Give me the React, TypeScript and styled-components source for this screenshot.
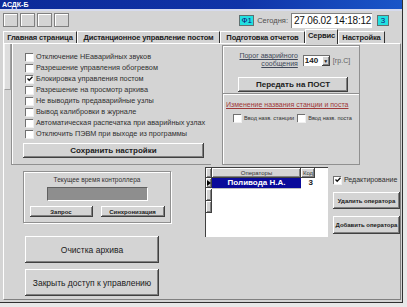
import React from "react";
import styled, { createGlobalStyle } from "styled-components";

const GlobalStyle = createGlobalStyle`
  html, body {
    margin: 0;
    padding: 0;
    background: #e8e8e8;
  }
  body {
    font-family: "Liberation Sans", Arial, sans-serif;
    color: #202020;
  }
`;

const raised = `
  background: #d4d4d4;
  box-shadow: inset -1px -1px #404040, inset 1px 1px #ffffff, inset -2px -2px #808080;
`;

const Window = styled.div`
  width: 403px;
  height: 303px;
  background: #d4d4d4;
  border-right: 1px solid #303030;
  border-bottom: 1px solid #303030;
  box-sizing: border-box;
  overflow: hidden;
`;

const TitleBar = styled.div`
  height: 9px;
  background: linear-gradient(90deg, #0c2a98 0%, #1034a8 60%, #1a56c8 100%);
  border-bottom: 2px solid #d6dbef;
  color: #fff;
  font-size: 7px;
  font-weight: bold;
  line-height: 9px;
  padding-left: 2px;
`;

const Toolbar = styled.div`
  height: 18px;
  display: flex;
  align-items: center;
  padding: 0 3px;
`;

const Square = styled.div`
  width: 15px;
  height: 14px;
  margin-right: 2px;
  box-sizing: border-box;
  border: 1px solid #808080;
  box-shadow: inset 1px 1px #ffffff;
  background: #d4d4d4;
`;

const Spacer = styled.div<{ $w?: number }>`
  flex: ${(p) => (p.$w ? "none" : "1")};
  width: ${(p) => p.$w ?? 0}px;
`;

const CyanBox = styled.div<{ $w: number }>`
  width: ${(p) => p.$w}px;
  height: 11px;
  box-sizing: border-box;
  background: #22e0e0;
  border: 1px solid #607070;
  color: #10107a;
  font-size: 8px;
  line-height: 9px;
  text-align: center;
`;

const TodayLabel = styled.span`
  font-size: 7.5px;
  color: #505050;
  margin: 0 3px 0 3px;
`;

const DateBox = styled.div`
  width: 81px;
  height: 15px;
  box-sizing: border-box;
  background: #fff;
  border-top: 1px solid #808080;
  border-left: 1px solid #808080;
  font-size: 10px;
  letter-spacing: -0.2px;
  line-height: 14px;
  padding-left: 2px;
  white-space: nowrap;
  overflow: hidden;
  color: #101010;
  margin-right: 5px;
`;

const TabStrip = styled.div`
  height: 14px;
  display: flex;
  align-items: flex-end;
  padding-left: 3px;
  position: relative;
  z-index: 1;
`;

const Tab = styled.div<{ $w: number; $active?: boolean }>`
  width: ${(p) => p.$w}px;
  height: ${(p) => (p.$active ? 15 : 12)}px;
  margin-bottom: ${(p) => (p.$active ? -1 : 0)}px;
  box-sizing: border-box;
  background: #d4d4d4;
  border-top: 1px solid #fff;
  border-left: 1px solid #fff;
  border-right: 1px solid #303030;
  font-size: 7.6px;
  letter-spacing: -0.15px;
  font-weight: bold;
  line-height: 11px;
  text-align: center;
  white-space: nowrap;
  overflow: hidden;
  color: #202020;
`;

const Panel = styled.div`
  margin-left: 3px;
  width: 398px;
  height: 257px;
  box-sizing: border-box;
  border-top: 1px solid #fff;
  border-left: 1px solid #fff;
  border-right: 1px solid #808080;
  border-bottom: 1px solid #808080;
  display: flex;
  flex-direction: column;
`;

const TopRow = styled.div`
  display: flex;
  height: 121px;
`;

const Strip = styled.div`
  width: 7px;
  height: 46px;
  box-sizing: border-box;
  background: #dedede;
  border-left: 1px solid #f4f4f4;
  border-right: 1px solid #a0a0a0;
  border-bottom: 1px solid #a0a0a0;
`;

const LeftGroup = styled.div`
  width: 200px;
  box-sizing: border-box;
  border-left: 1px solid #909090;
  box-shadow: inset 1px 0 #fff;
  border-bottom: 1px solid #909090;
  padding: 7px 0 0 13px;
  display: flex;
  flex-direction: column;
`;

const CheckRow = styled.label<{ $h?: number; $size?: number }>`
  display: flex;
  align-items: center;
  height: ${(p) => p.$h ?? 11}px;
  font-size: ${(p) => p.$size ?? 7.3}px;
  color: #303030;
  white-space: nowrap;
`;

const Box = styled.span`
  width: 8px;
  height: 8px;
  box-sizing: border-box;
  background: #fff;
  border-top: 1px solid #707070;
  border-left: 1px solid #707070;
  box-shadow: 1px 1px 0 #f0f0f0;
  margin-right: 3px;
  display: inline-flex;
  align-items: center;
  justify-content: center;
  flex: none;
`;

function Check({ checked, label, size, h }: { checked?: boolean; label: string; size?: number; h?: number }) {
  return (
    <CheckRow $size={size} $h={h}>
      <Box>
        {checked && (
          <svg width="6" height="6" viewBox="0 0 6 6">
            <path d="M0.5 2.5 L2.2 4.3 L5.5 0.8" stroke="#101010" strokeWidth="1.3" fill="none" />
          </svg>
        )}
      </Box>
      {label}
    </CheckRow>
  );
}

const Button = styled.div<{ $w: number; $h: number; $size?: number; $bold?: boolean }>`
  ${raised}
  width: ${(p) => p.$w}px;
  height: ${(p) => p.$h}px;
  box-sizing: border-box;
  display: flex;
  align-items: center;
  justify-content: center;
  font-size: ${(p) => p.$size ?? 8}px;
  font-weight: ${(p) => (p.$bold ? "bold" : "normal")};
  color: #202020;
  white-space: nowrap;
`;

const SaveButton = styled(Button)`
  margin: 4px 0 0 -2px;
`;

const RightGroup = styled.div`
  width: 138px;
  margin: 1px 0 0 11px;
  box-sizing: border-box;
  border: 1px solid #909090;
  box-shadow: inset 1px 1px #fff;
  display: flex;
  flex-direction: column;
`;

const ThresholdPart = styled.div`
  height: 48px;
  box-sizing: border-box;
  border-bottom: 1px solid #909090;
  box-shadow: 0 1px #fff;
  display: flex;
  flex-direction: column;
  align-items: center;
  padding-top: 6px;
`;

const ThresholdRow = styled.div`
  display: flex;
  align-items: center;
  margin-left: 4px;
`;

const ThresholdLabel = styled.div`
  font-size: 7px;
  line-height: 8px;
  text-align: right;
  text-decoration: underline;
  color: #404858;
  width: 62px;
`;

const Select = styled.div`
  width: 27px;
  height: 11px;
  box-sizing: border-box;
  background: #fff;
  border-top: 1px solid #707070;
  border-left: 1px solid #707070;
  margin-left: 5px;
  display: flex;
  font-size: 8px;
  font-weight: bold;
  line-height: 10px;
  padding-left: 1px;
`;

const SelectArrow = styled.span`
  ${raised}
  margin-left: auto;
  width: 8px;
  font-size: 5px;
  text-align: center;
  font-weight: normal;
`;

const Unit = styled.span`
  font-size: 7px;
  color: #606060;
  margin-left: 3px;
`;

const SendButton = styled(Button)`
  margin-top: 9px;
  margin-left: 4px;
`;

const RenamePart = styled.div`
  padding: 7px 0 0 3px;
  display: flex;
  flex-direction: column;
`;

const RenameTitle = styled.div`
  font-size: 7px;
  color: #a03838;
  text-decoration: underline;
  white-space: nowrap;
`;

const RenameChecks = styled.div`
  display: flex;
  gap: 3px;
  margin: 4px 0 0 7px;
`;

const BottomRow = styled.div`
  display: flex;
  padding-left: 19px;
`;

const LeftCol = styled.div`
  width: 148px;
  display: flex;
  flex-direction: column;
`;

const TimeGroup = styled.div`
  margin-top: 6px;
  height: 52px;
  box-sizing: border-box;
  border: 1px solid #909090;
  box-shadow: inset 1px 1px #fff, 1px 1px #fff;
  display: flex;
  flex-direction: column;
  align-items: center;
  padding-top: 4px;
`;

const SmallTitle = styled.div`
  font-size: 6.5px;
  color: #303030;
`;

const TimeDisplay = styled.div`
  width: 101px;
  height: 14px;
  margin-top: 4px;
  box-sizing: border-box;
  background: #8e8e8e;
  border-top: 1px solid #606060;
  border-left: 1px solid #606060;
  border-right: 1px solid #fff;
  border-bottom: 1px solid #fff;
`;

const TimeButtons = styled.div`
  display: flex;
  gap: 8px;
  margin-top: 5px;
`;

const BigButton = styled(Button)`
  margin-left: 2px;
  margin-top: 6px;
`;

const BigButtons = styled.div`
  display: flex;
  flex-direction: column;
  margin-top: 7px;
`;

const Grid = styled.div`
  width: 123px;
  height: 70px;
  margin: 2px 0 0 34px;
  box-sizing: border-box;
  background: #fff;
  border-top: 1px solid #404040;
  border-left: 1px solid #404040;
  display: grid;
  grid-template-columns: 6px 89px 14px;
  grid-auto-rows: min-content;
  align-content: start;
`;

const HeadCell = styled.div`
  ${raised}
  height: 10px;
  font-size: 6px;
  line-height: 10px;
  text-align: center;
  color: #303030;
`;

const Indicator = styled.div<{ $grey?: boolean }>`
  ${raised}
  height: ${(p) => (p.$grey ? 12 : 10)}px;
  display: flex;
  align-items: center;
  justify-content: center;
`;

const NameCell = styled.div`
  height: 10px;
  background: #0a0a9a;
  color: #fff;
  font-size: 8px;
  font-weight: bold;
  line-height: 10px;
  text-align: center;
  border-bottom: 1px solid #c0c0c0;
`;

const CodeCell = styled.div`
  height: 10px;
  font-size: 8px;
  font-weight: bold;
  line-height: 10px;
  text-align: right;
  padding-right: 2px;
  box-sizing: border-box;
`;

const EmptyCell = styled.div`
  height: 12px;
`;

const RightCol = styled.div`
  margin: 9px 0 0 5px;
  width: 67px;
  display: flex;
  flex-direction: column;
`;

const OperatorButton = styled(Button)`
  margin-top: 7px;
`;

export default function App() {
  const options = [
    { label: "Отключение НЕаварийных звуков" },
    { label: "Разрешение управления обогревом" },
    { label: "Блокировка управления постом", checked: true },
    { label: "Разрешение на просмотр архива" },
    { label: "Не выводить  предаварийные узлы" },
    { label: "Вывод калибровки в журнале" },
    { label: "Автоматическая распечатка при аварийных узлах" },
    { label: "Отключить ПЭВМ при выходе из программы" },
  ];

  return (
    <>
      <GlobalStyle />
      <Window>
        <TitleBar>АСДК-Б</TitleBar>
        <Toolbar>
          <Square />
          <Square />
          <Square />
          <Square />
          <Spacer />
          <CyanBox $w={15}>Ф1</CyanBox>
          <TodayLabel>Сегодня:</TodayLabel>
          <DateBox>27.06.02 14:18:12</DateBox>
          <CyanBox $w={12}>3</CyanBox>
          <Spacer $w={10} />
        </Toolbar>
        <TabStrip>
          <Tab $w={74}>Главная страница</Tab>
          <Tab $w={143}>Дистанционное управление постом</Tab>
          <Tab $w={85}>Подготовка отчетов</Tab>
          <Tab $w={33} $active>
            Сервис
          </Tab>
          <Tab $w={47}>Настройка</Tab>
        </TabStrip>
        <Panel>
          <TopRow>
            <Strip />
            <LeftGroup>
              {options.map((o) => (
                <Check key={o.label} label={o.label} checked={o.checked} />
              ))}
              <SaveButton $w={181} $h={15} $bold>
                Сохранить настройки
              </SaveButton>
            </LeftGroup>
            <RightGroup>
              <ThresholdPart>
                <ThresholdRow>
                  <ThresholdLabel>
                    Порог аварийного
                    <br />
                    сообщения
                  </ThresholdLabel>
                  <Select>
                    140
                    <SelectArrow>▼</SelectArrow>
                  </Select>
                  <Unit>[гр.С]</Unit>
                </ThresholdRow>
                <SendButton $w={110} $h={15} $bold>
                  Передать на ПОСТ
                </SendButton>
              </ThresholdPart>
              <RenamePart>
                <RenameTitle>Изменение названия станции и поста</RenameTitle>
                <RenameChecks>
                  <Check label="Ввод назв. станции" size={5.6} />
                  <Check label="Ввод назв. поста" size={5.6} />
                </RenameChecks>
              </RenamePart>
            </RightGroup>
          </TopRow>
          <BottomRow>
            <LeftCol>
              <TimeGroup>
                <SmallTitle>Текущее время контроллера</SmallTitle>
                <TimeDisplay />
                <TimeButtons>
                  <Button $w={63} $h={11} $size={6} $bold>
                    Запрос
                  </Button>
                  <Button $w={64} $h={11} $size={6} $bold>
                    Синхронизация
                  </Button>
                </TimeButtons>
              </TimeGroup>
              <BigButtons>
                <BigButton $w={134} $h={27} $size={8.5}>
                  Очистка архива
                </BigButton>
                <BigButton $w={134} $h={27} $size={8.5}>
                  Закрыть доступ к управлению
                </BigButton>
              </BigButtons>
            </LeftCol>
            <Grid>
              <HeadCell />
              <HeadCell>Операторы</HeadCell>
              <HeadCell>Код</HeadCell>
              <Indicator>
                <svg width="4" height="6" viewBox="0 0 4 6">
                  <path d="M0 0 L4 3 L0 6 Z" fill="#000" />
                </svg>
              </Indicator>
              <NameCell>Поливода Н.А.</NameCell>
              <CodeCell>3</CodeCell>
              <Indicator $grey />
              <EmptyCell />
              <EmptyCell />
              <Indicator $grey />
              <EmptyCell />
              <EmptyCell />
            </Grid>
            <RightCol>
              <Check label="Редактирование" checked size={7} />
              <OperatorButton $w={67} $h={17} $size={6} $bold>
                Удалить оператора
              </OperatorButton>
              <OperatorButton $w={67} $h={18} $size={6} $bold>
                Добавить оператора
              </OperatorButton>
            </RightCol>
          </BottomRow>
        </Panel>
      </Window>
    </>
  );
}
